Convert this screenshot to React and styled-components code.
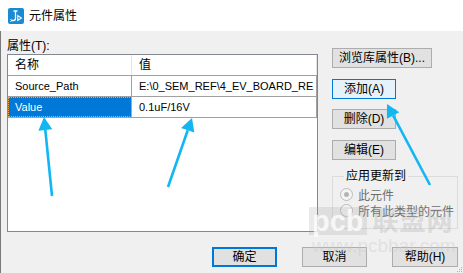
import React from 'react'
import styled, { createGlobalStyle } from 'styled-components'

const GlobalStyle = createGlobalStyle`
  html, body {
    margin: 0;
    padding: 0;
  }
  body {
    font-family: "Liberation Sans", "Noto Sans CJK SC", sans-serif;
    font-size: 12px;
    color: #000;
    background: #f0f0f0;
  }
  * {
    box-sizing: border-box;
  }
`

const rows = [
  { name: 'Source_Path', value: 'E:\\0_SEM_REF\\4_EV_BOARD_RE' },
  { name: 'Value', value: '0.1uF/16V', selected: true },
]

// annotation arrows: tail -> tip
const arrows = [
  { x1: 52, y1: 196, x2: 44, y2: 117 },
  { x1: 168, y1: 187, x2: 192, y2: 118 },
  { x1: 430, y1: 185, x2: 387, y2: 104 },
]

function arrowHead({ x1, y1, x2, y2 }) {
  const len = Math.hypot(x2 - x1, y2 - y1)
  const dx = (x2 - x1) / len
  const dy = (y2 - y1) / len
  const bx = x2 - dx * 13
  const by = y2 - dy * 13
  const px = -dy * 7
  const py = dx * 7
  return {
    line: { x2: bx, y2: by },
    points: `${x2},${y2} ${bx + px},${by + py} ${bx - px},${by - py}`,
  }
}

export default function App() {
  return (
    <>
      <GlobalStyle />
      <Window>
        <TitleBar>
          <AppIcon viewBox="0 0 16 16">
            <rect x="0" y="0" width="16" height="16" rx="2" fill="#1c8ad3" />
            <path d="M5.5 3h4M7.5 3v7.5q0 2-2 2H3" stroke="#fff" strokeWidth="1.3" fill="none" />
            <path d="M2.5 11.2 3.5 12.5 2.5 13.8" stroke="#fff" strokeWidth="1" fill="none" />
            <path d="M9.8 7.6 13.4 10 9.8 12.4Z" stroke="#fff" strokeWidth="1.1" fill="none" />
          </AppIcon>
          <Title>元件属性</Title>
        </TitleBar>

        <Body>
          <Main>
            <LeftPane>
              <Label>属性(T):</Label>
              <ListBox>
                <Header>
                  <HeaderCell>名称</HeaderCell>
                  <HeaderCell>值</HeaderCell>
                </Header>
                <Rows>
                  {rows.map((row) => (
                    <Row key={row.name}>
                      <Cell $selected={row.selected}>{row.name}</Cell>
                      <Cell>{row.value}</Cell>
                    </Row>
                  ))}
                </Rows>
              </ListBox>
            </LeftPane>

            <RightPane>
              <Button $width={100}>浏览库属性(B)...</Button>
              <Button $width={64} $hover $gap={11}>添加(A)</Button>
              <Button $width={64} $gap={10}>删除(D)</Button>
              <Button $width={64} $gap={11}>编辑(E)</Button>

              <Group>
                <Legend>应用更新到</Legend>
                <RadioRow>
                  <Radio $checked />
                  此元件
                </RadioRow>
                <RadioRow>
                  <Radio />
                  所有此类型的元件
                </RadioRow>
              </Group>
            </RightPane>
          </Main>

          <Footer>
            <Button $width={65} $default>确定</Button>
            <Button $width={65}>取消</Button>
            <Button $width={66}>帮助(H)</Button>
          </Footer>
        </Body>

        <Watermark>
          <WmTop>
            <WmLogo>pcb</WmLogo>
            <WmName>联盟网</WmName>
          </WmTop>
          <WmUrl>www.pcbbar.com</WmUrl>
        </Watermark>

        <Grip viewBox="0 0 8 8">
          <rect x="6" y="2" width="1" height="1" fill="#b0b0b0" />
          <rect x="4" y="4" width="1" height="1" fill="#b0b0b0" />
          <rect x="6" y="4" width="1" height="1" fill="#b0b0b0" />
          <rect x="2" y="6" width="1" height="1" fill="#b0b0b0" />
          <rect x="4" y="6" width="1" height="1" fill="#b0b0b0" />
          <rect x="6" y="6" width="1" height="1" fill="#b0b0b0" />
        </Grip>

        <Annotations viewBox="0 0 463 273">
          {arrows.map((a, i) => {
            const head = arrowHead(a)
            return (
              <g key={i}>
                <line
                  x1={a.x1}
                  y1={a.y1}
                  x2={head.line.x2}
                  y2={head.line.y2}
                  stroke="#12b6f2"
                  strokeWidth="2.6"
                />
                <polygon points={head.points} fill="#12b6f2" />
              </g>
            )
          })}
        </Annotations>
      </Window>
    </>
  )
}

const Window = styled.div`
  position: relative;
  width: 463px;
  height: 273px;
  display: flex;
  flex-direction: column;
  overflow: hidden;
`
const TitleBar = styled.div`
  height: 31px;
  flex: none;
  background: #fff;
  display: flex;
  align-items: center;
  gap: 5px;
  padding: 1px 0 0 8px;
`
const AppIcon = styled.svg`
  width: 16px;
  height: 16px;
  display: block;
`
const Title = styled.div`
  font-size: 12px;
  line-height: 16px;
`
const Body = styled.div`
  flex: 1;
  background: #f0f0f0;
  border-left: 1px solid #7a7a7a;
  padding: 0 5px 0 6px;
  display: flex;
  flex-direction: column;
`
const Main = styled.div`
  display: flex;
  gap: 14px;
  align-items: flex-start;
`
const LeftPane = styled.div`
  width: 311px;
  display: flex;
  flex-direction: column;
`
const Label = styled.div`
  margin-top: 8px;
  height: 15px;
  line-height: 15px;
  font-size: 12px;
`
const ListBox = styled.div`
  height: 178px;
  border: 1px solid #828790;
  background: #fff;
  overflow: hidden;
`
const Header = styled.div`
  display: grid;
  grid-template-columns: 124px 1fr;
  height: 20px;
`
const HeaderCell = styled.div`
  padding-left: 7px;
  line-height: 20px;
  font-size: 12px;
  border-right: 1px solid #e5e5e5;
`
const Rows = styled.div`
  border-top: 1px solid #a0a0a0;
`
const Row = styled.div`
  display: grid;
  grid-template-columns: 124px 1fr;
  height: 21px;
  border-bottom: 1px solid #a0a0a0;
`
const Cell = styled.div`
  padding-left: 7px;
  font-size: 11px;
  line-height: 20px;
  white-space: nowrap;
  overflow: hidden;
  border-right: 1px solid #a0a0a0;
  background: ${({ $selected }) => ($selected ? '#0078d7' : 'transparent')};
  color: ${({ $selected }) => ($selected ? '#fff' : '#000')};
  outline: ${({ $selected }) => ($selected ? '1px dotted #f3a64a' : 'none')};
  outline-offset: -1px;
`
const RightPane = styled.div`
  width: 126px;
  padding-top: 17px;
  display: flex;
  flex-direction: column;
  align-items: flex-start;
`
const Button = styled.button`
  width: ${({ $width }) => $width}px;
  height: 20px;
  flex: none;
  margin: ${({ $gap }) => $gap || 0}px 0 0 0;
  padding: 0;
  font-family: inherit;
  font-size: 12px;
  line-height: 16px;
  color: #000;
  background: ${({ $hover }) => ($hover ? '#e5f1fb' : '#e1e1e1')};
  border: ${({ $hover, $default }) =>
    $default ? '2px solid #0078d7' : $hover ? '1px solid #0078d7' : '1px solid #adadad'};
  border-radius: 0;
`
const Group = styled.fieldset`
  width: 126px;
  height: 60px;
  margin: 9px 0 0 0;
  padding: 3px 0 0 7px;
  border: 1px solid #dcdcdc;
  display: flex;
  flex-direction: column;
  gap: 0;
`
const Legend = styled.legend`
  padding: 0 2px;
  margin-left: 4px;
  font-size: 12px;
  line-height: 14px;
`
const RadioRow = styled.div`
  display: flex;
  align-items: center;
  gap: 5px;
  height: 16px;
  font-size: 12px;
  color: #6d6d6d;
`
const Radio = styled.span`
  width: 13px;
  height: 13px;
  flex: none;
  border-radius: 50%;
  border: 1px solid #bcbcbc;
  background: #f4f4f4;
  position: relative;

  &::after {
    content: '';
    display: ${({ $checked }) => ($checked ? 'block' : 'none')};
    position: absolute;
    left: 3px;
    top: 3px;
    width: 5px;
    height: 5px;
    border-radius: 50%;
    background: #b4b4b4;
  }
`
const Footer = styled.div`
  margin-top: 15px;
  display: flex;
  justify-content: flex-end;
  gap: 25px;
`
const Watermark = styled.div`
  position: absolute;
  left: 309px;
  top: 207px;
  width: 152px;
  pointer-events: none;
`
const WmTop = styled.div`
  display: flex;
  align-items: center;
  gap: 6px;
  height: 28px;
`
const WmLogo = styled.span`
  font-family: "Liberation Sans", sans-serif;
  font-weight: bold;
  font-size: 29px;
  line-height: 28px;
  padding: 0 3px;
  color: rgba(255, 255, 255, 0.8);
  background: rgba(160, 160, 160, 0.22);
`
const WmName = styled.span`
  font-weight: bold;
  font-size: 26px;
  line-height: 28px;
  letter-spacing: 1px;
  color: rgba(170, 170, 170, 0.32);
`
const WmUrl = styled.div`
  margin-top: 4px;
  padding-left: 3px;
  font-family: "Liberation Sans", sans-serif;
  font-size: 19px;
  line-height: 14px;
  height: 14px;
  white-space: nowrap;
  color: rgba(200, 200, 200, 0.4);
`
const Grip = styled.svg`
  position: absolute;
  right: 0;
  bottom: 0;
  width: 8px;
  height: 8px;
`
const Annotations = styled.svg`
  position: absolute;
  left: 0;
  top: 0;
  width: 463px;
  height: 273px;
  pointer-events: none;
`
